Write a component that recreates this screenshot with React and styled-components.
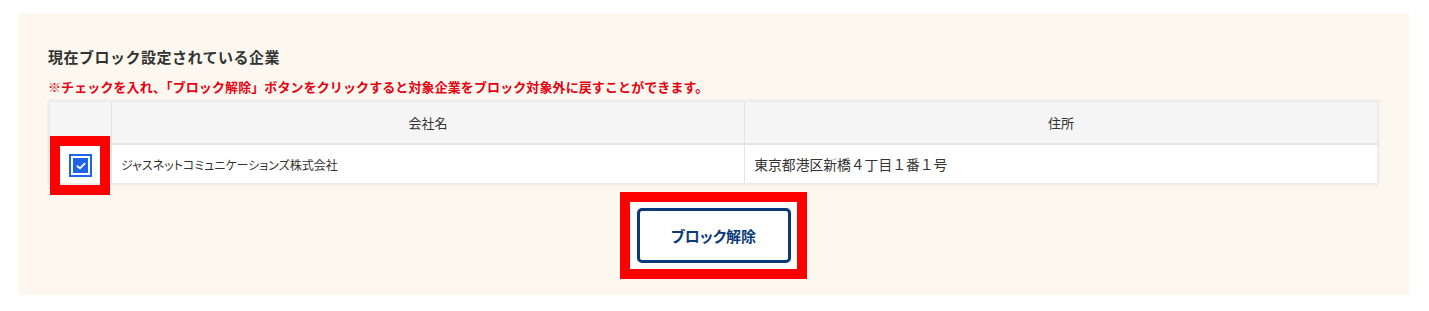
import React, { useState } from 'react'
import styled, { createGlobalStyle } from 'styled-components'

const GlobalStyle = createGlobalStyle`
  body {
    margin: 0;
    background: #ffffff;
    font-family: "Noto Sans CJK JP", "Noto Sans", sans-serif;
    color: #333333;
  }
`

const Panel = styled.section`
  margin: 13px 20px 16px 18px;
  padding: 33px 30px 32px 30px;
  background: #fcf8ef;
  display: flex;
  flex-direction: column;
`

const Title = styled.h2`
  margin: 0;
  font-size: 15px;
  line-height: 22px;
  font-weight: 700;
  letter-spacing: 0.5px;
  color: #333333;
`

const Note = styled.p`
  margin: 10px 0 4px;
  font-size: 13px;
  line-height: 18px;
  font-weight: 700;
  color: #e60012;
  letter-spacing: 0.1px;
`

const Table = styled.table`
  width: 100%;
  border-collapse: collapse;
  background: #ffffff;
  border: 2px solid #ececec;
  box-shadow: 0 0 2px rgba(0, 0, 0, 0.06);
  table-layout: fixed;
`

const HeadCell = styled.th`
  height: 41px;
  padding: 0;
  background: #f5f5f5;
  border-bottom: 2px solid #e4e4e4;
  border-left: 1px solid #e4e4e4;
  font-size: 13px;
  font-weight: 400;
  color: #333333;
  text-align: center;
  width: ${p => p.$width || 'auto'};

  &:first-child {
    border-left: none;
  }
`

const Cell = styled.td`
  height: 38px;
  padding: 0 10px 0 9px;
  border-left: 1px solid #e4e4e4;
  font-size: ${p => p.$size || '13px'};
  color: #333333;
  font-feature-settings: ${p => (p.$narrow ? '"palt"' : 'normal')};

  &:first-child {
    border-left: none;
  }
`

const CheckCell = styled.td`
  position: relative;
  padding: 0;
  text-align: center;
  z-index: 0;

  &::after {
    content: '';
    position: absolute;
    left: 0;
    top: -9px;
    width: 40px;
    height: 39px;
    border: 10px solid #ff0000;
    pointer-events: none;
  }
`

const CheckBox = styled.button`
  width: 23px;
  height: 23px;
  padding: 2px;
  border: 2px solid #1f63e6;
  background: #ffffff;
  display: inline-flex;
  vertical-align: middle;
  cursor: pointer;

  span {
    flex: 1;
    display: flex;
    align-items: center;
    justify-content: center;
    background: ${p => (p.$checked ? '#1f63e6' : '#ffffff')};
  }
`

const Actions = styled.div`
  display: flex;
  justify-content: center;
  margin-top: 23px;
`

const HighlightWrap = styled.div`
  position: relative;
  z-index: 0;

  &::before {
    content: '';
    position: absolute;
    inset: -16px -16px -16px -17px;
    border: 10px solid #ff0000;
    background: #fffffd;
    z-index: -1;
  }
`

const UnblockButton = styled.button`
  width: 154px;
  height: 55px;
  border: 3px solid #0b3a78;
  border-radius: 5px;
  background: #ffffff;
  color: #0b3a78;
  font-family: "Noto Sans CJK JP", sans-serif;
  font-size: 15px;
  font-weight: 700;
  font-feature-settings: "palt";
  cursor: pointer;
`

const Check = () => (
  <svg width="10" height="8" viewBox="0 0 10 8" fill="none">
    <path d="M1.5 4.2 L4 6.4 L8.6 1.6" stroke="#fff" strokeWidth="1.8" strokeLinecap="round" strokeLinejoin="round" />
  </svg>
)

const App = () => {
  const [checked, setChecked] = useState(true)

  return (
    <>
      <GlobalStyle />
      <Panel>
        <Title>現在ブロック設定されている企業</Title>
        <Note>※チェックを入れ、「ブロック解除」ボタンをクリックすると対象企業をブロック対象外に戻すことができます。</Note>
        <Table>
          <thead>
            <tr>
              <HeadCell $width="61px"></HeadCell>
              <HeadCell>会社名</HeadCell>
              <HeadCell>住所</HeadCell>
            </tr>
          </thead>
          <tbody>
            <tr>
              <CheckCell>
                <CheckBox $checked={checked} onClick={() => setChecked(c => !c)}>
                  <span>{checked && <Check />}</span>
                </CheckBox>
              </CheckCell>
              <Cell $narrow $size="12px">ジャスネットコミュニケーションズ株式会社</Cell>
              <Cell $size="13.8px">東京都港区新橋４丁目１番１号</Cell>
            </tr>
          </tbody>
        </Table>
        <Actions>
          <HighlightWrap>
            <UnblockButton>ブロック解除</UnblockButton>
          </HighlightWrap>
        </Actions>
      </Panel>
    </>
  )
}

export default App
